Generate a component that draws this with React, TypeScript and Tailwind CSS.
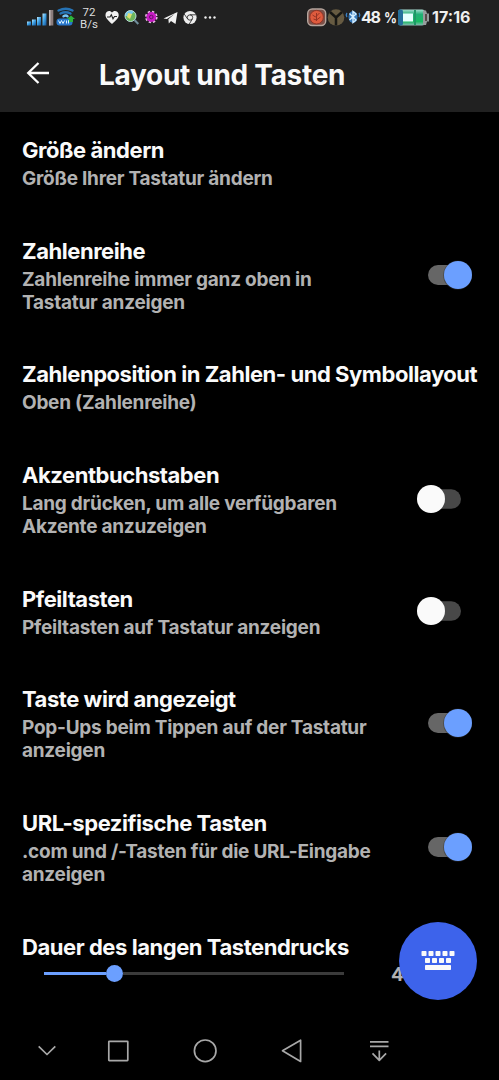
import React from "react";

type Row = { title: string; lines: string[]; toggle?: boolean };

const rows: Row[] = [
  { title: "Größe ändern", lines: ["Größe Ihrer Tastatur ändern"] },
  { title: "Zahlenreihe", lines: ["Zahlenreihe immer ganz oben in", "Tastatur anzeigen"], toggle: true },
  { title: "Zahlenposition in Zahlen- und Symbollayout", lines: ["Oben (Zahlenreihe)"] },
  { title: "Akzentbuchstaben", lines: ["Lang drücken, um alle verfügbaren", "Akzente anzuzeigen"], toggle: false },
  { title: "Pfeiltasten", lines: ["Pfeiltasten auf Tastatur anzeigen"], toggle: false },
  { title: "Taste wird angezeigt", lines: ["Pop-Ups beim Tippen auf der Tastatur", "anzeigen"], toggle: true },
  { title: "URL-spezifische Tasten", lines: [".com und /-Tasten für die URL-Eingabe", "anzeigen"], toggle: true },
];

function Toggle({ on }: { on: boolean }) {
  return (
    <svg width="56" height="30" viewBox="0 0 56 30" className="shrink-0" role="switch" aria-checked={on}>
      {on ? (
        <>
          <rect x="12" y="5" width="34" height="20" rx="10" fill="#666" />
          <circle cx="41.7" cy="15.2" r="14.6" fill="#333" opacity=".5" />
          <circle cx="42" cy="15" r="14" fill="#6b9fff" />
        </>
      ) : (
        <>
          <rect x="13" y="5.3" width="32" height="19.5" rx="9.75" fill="#484848" />
          <circle cx="15" cy="15" r="14" fill="#fafafa" />
        </>
      )}
    </svg>
  );
}

function StatusBar() {
  return (
    <div className="flex h-9 items-center justify-between">
      <svg width="225" height="36" viewBox="0 0 225 36" fontFamily="Roboto, sans-serif" fontWeight="400">
        <defs>
          <linearGradient id="sig" x1="0" y1="0" x2="1" y2="1">
            <stop offset="0" stopColor="#bceaff" />
            <stop offset=".5" stopColor="#389ce0" />
            <stop offset="1" stopColor="#164d91" />
          </linearGradient>
        </defs>
        <g fill="url(#sig)">
          <rect x="27" y="21.5" width="4" height="4" />
          <rect x="32" y="19.5" width="4" height="6" />
          <rect x="37" y="17" width="4" height="8.5" />
          <rect x="42.5" y="13.5" width="4" height="12" />
        </g>
        <rect x="49" y="10" width="4.3" height="15.5" fill="#8c7d7d" />
        <path d="M49 25.5V10h1.5v15.5z" fill="#c3bcbc" />
        <g fill="none" stroke="#2673b5" strokeWidth="2.4" strokeLinecap="round">
          <path d="M58.500 10.500q7.500-3.500 14 0M60.500 13.500q5-2.500 10 0" />
          <path d="M63.500 16.300q2.500-1.500 4 0" stroke="#75c7fa" />
        </g>
        <rect x="56.500" y="18.500" width="16" height="7" rx="3" fill="#2877cc" />
        <path d="M58.500 20.500l1.500 3 1.500-3 1.500 3 1.500-3M66.500 20.500v3M68.500 23.500v-3h2" stroke="#d7f1ff" fill="none" />
        <path d="M67 19l4-3.500 4 3.500h-2v3h-4v-3z" fill="#2db43b" />
        <text x="89" y="15.500" fontSize="11.500" fill="#ddd" textAnchor="middle">72</text>
        <text x="89" y="27.500" fontSize="11.500" fill="#ddd" textAnchor="middle">B/s</text>
        <path d="M112 24C107 19.500 105.500 17.500 105.500 15c0-4 4.500-5.500 6.500-2.500 2-3 6.700-1.500 6.700 2.500 0 2.500-2 5-6.700 9z" fill="#f2f2f2" />
        <path d="M107 17h3l1.300-2.200 1.700 4 1.500-2.300h2.500" fill="none" stroke="#252525" strokeWidth="1.100" />
        <circle cx="130.500" cy="16" r="5.500" fill="#6db65c" />
        <path d="M125 16a5.500 5.500 0 0 1 9-4.200L130 16z" fill="#74c7ed" />
        <path d="M128 13l4 1-2 5-3-2z" fill="#dfdf72" />
        <circle cx="130.500" cy="16" r="5.500" fill="none" stroke="#b8dcdb" />
        <path d="M134.500 20l3.800 4" stroke="#718f9c" strokeWidth="2" />
        <circle cx="151.300" cy="17" r="5.400" fill="none" stroke="#eabae6" strokeWidth="1.800" strokeDasharray="2.400 1.840" />
        <circle cx="151.300" cy="17" r="4.900" fill="#c71bc5" />
        <circle cx="151.300" cy="17" r="1.800" fill="none" stroke="#691365" />
        <path d="M163.500 18.500L177.500 12l-2 12-4.500-3-2.200 2.500-.4-4.300 6-5.200-7.500 5z" fill="#f2f2f2" />
        <circle cx="190" cy="17.500" r="6.600" fill="#eee" />
        <g fill="none" stroke="#303030" strokeWidth=".9">
          <circle cx="190" cy="17.500" r="2.700" />
          <path d="M190 14.800h6M187.700 19l-3.500-5M192.300 19l-3 5" />
        </g>
        <g fill="#eee"><circle cx="205.500" cy="17.500" r="1.200" /><circle cx="210" cy="17.500" r="1.200" /><circle cx="214.500" cy="17.500" r="1.200" /></g>
      </svg>
      <svg width="199" height="36" viewBox="300 0 199 36" fontFamily="Inter, sans-serif">
        <defs>
          <linearGradient id="bat" x1="0" y1="0" x2="0" y2="1">
            <stop offset="0" stopColor="#a8ded3" />
            <stop offset=".3" stopColor="#22af77" />
            <stop offset=".75" stopColor="#18ba62" />
            <stop offset="1" stopColor="#8db9b6" />
          </linearGradient>
        </defs>
        <rect x="307.700" y="9" width="18" height="16.500" rx="4.500" fill="#7d5149" stroke="#b5a59d" strokeWidth="1.400" />
        <circle cx="316.600" cy="17.200" r="6.800" fill="#df5b3e" stroke="#903325" />
        <path d="M312.500 15l3 2 4-4M313.500 19l3 1 4-3M316.500 13v8" fill="none" stroke="#963324" strokeWidth="1" />
        <circle cx="336" cy="17.500" r="8.300" fill="#675b42" />
        <path d="M330 12l6 5.500 6-5.500M336 17.500v8" fill="none" stroke="#171714" strokeWidth="2.500" />
        <g fill="none" strokeWidth="1.400">
          <ellipse cx="353" cy="17" rx="4.500" ry="6" fill="#3478bb" />
          <path d="M349.500 13.500l6.500 6.500-3 2.500V11.500l3 2.500-6.500 6" stroke="#d5efff" />
          <path d="M347 13q-1.500 2 0 4M359 13q1.500 2 0 4" stroke="#397fc3" />
        </g>
        <text x="361" y="23" fontSize="16" fontWeight="700" fill="#f1f1f1" textLength="20">48</text>
        <text x="384" y="23" fontSize="15" fontWeight="700" fill="#f1f1f1" textLength="13" lengthAdjust="spacingAndGlyphs">%</text>
        <rect x="398" y="9.500" width="27" height="16" rx="3" fill="url(#bat)" />
        <rect x="398" y="9.500" width="5" height="16" rx="2" fill="#246f9b" />
        <rect x="403" y="13.500" width="10" height="8" fill="#e5ffff" />
        <rect x="414" y="10" width="2" height="15" fill="#1e9867" />
        <path d="M423 10.500h3l1 3h2v8h-2l-1 3.500h-3z" fill="#969d9d" />
        <path d="M425 14h2v7h-2z" fill="#594b4b" />
        <text x="432" y="23" fontSize="16" fontWeight="650" fill="#eee" textLength="38.500">17:16</text>
      </svg>
    </div>
  );
}

export default function App() {
  return (
    <div className="relative flex h-[1080px] w-[499px] flex-col overflow-hidden bg-black font-['Inter',sans-serif] font-[650]">
      <header className="h-[112px] shrink-0 bg-[#212121]">
        <StatusBar />
        <div className="flex h-[76px] items-center pl-[26px]">
          <svg width="24" height="24" viewBox="0 0 24 24" fill="none" stroke="#fff" strokeWidth="2.300" className="mb-[3px]">
            <path d="M23 12H2M12.500 2L2.200 12l10.300 10" />
          </svg>
          <h1 className="ml-[49px] pt-px text-[28px] leading-8 tracking-[-0.3px] whitespace-nowrap text-[#fafafa]">Layout und Tasten</h1>
        </div>
      </header>
      <main className="flex flex-1 flex-col">
        {rows.map((r) => (
          <section key={r.title} className="flex items-center justify-between pr-[27px] pl-[22px]">
            <div className="w-0 pt-[23px] pb-[22.7px]">
              <h2 className="pb-px text-[22px] leading-[31px] tracking-[-0.45px] whitespace-nowrap text-[#fafafa]">{r.title}</h2>
              {r.lines.map((l) => (
                <p key={l} className="text-[19px] leading-[23px] tracking-[-0.25px] whitespace-nowrap text-[#b2b2b2]">{l}</p>
              ))}
            </div>
            {r.toggle !== undefined && <Toggle on={r.toggle} />}
          </section>
        ))}
        <section className="pt-[23px] pl-[22px]">
          <h2 className="text-[22px] leading-[31px] tracking-[-0.45px] text-[#fafafa]">Dauer des langen Tastendrucks</h2>
          <div className="-mt-px flex h-6 items-center pl-[22px]">
            <div className="flex w-[300px] items-center">
              <div className="h-[3px] w-[62px] bg-[#6b9fff]" />
              <div className="size-[17px] rounded-full bg-[#6b9fff]" />
              <div className="h-[3px] flex-1 bg-[#3b3b3b]" />
            </div>
            <span className="ml-[47px] pt-[3px] text-[19px] text-[#b2b2b2]">4</span>
          </div>
        </section>
      </main>
      <nav className="h-[58px] shrink-0">
        <svg width="499" height="58" viewBox="0 1022 499 58" fill="none" stroke="#a8a8a8" strokeWidth="1.700" strokeLinejoin="round">
          <path d="M38.700 1046.300l8.300 8.200 8.300-8.200" />
          <rect x="108.800" y="1041.300" width="19" height="19.300" rx=".5" />
          <circle cx="205.200" cy="1050.800" r="10.800" />
          <path d="M300.600 1040.200v21.200L282.500 1050.800z" />
          <path d="M370 1041.800h18.500M370 1046.400h18.500M379.300 1050.500v10M372.500 1053.300l6.800 7 6.800-7" />
        </svg>
      </nav>
      <button className="absolute top-[922px] left-[399px] flex size-[78px] items-center justify-center rounded-full bg-[#3d63eb]" aria-label="Tastatur">
        <svg width="36" height="22" viewBox="0 0 36 22" fill="#fafafa">
          <rect x="1.500" y="1" width="5" height="5" rx=".7" /><rect x="8.500" y="1" width="5" height="5" rx=".7" /><rect x="15.500" y="1" width="5" height="5" rx=".7" /><rect x="22.500" y="1" width="5" height="5" rx=".7" /><rect x="29.500" y="1" width="5" height="5" rx=".7" />
          <rect x="5" y="8" width="5" height="5" rx=".7" /><rect x="12" y="8" width="5" height="5" rx=".7" /><rect x="19" y="8" width="5" height="5" rx=".7" /><rect x="26" y="8" width="5" height="5" rx=".7" />
          <rect x="5" y="15" width="26" height="5" rx=".7" />
        </svg>
      </button>
    </div>
  );
}
